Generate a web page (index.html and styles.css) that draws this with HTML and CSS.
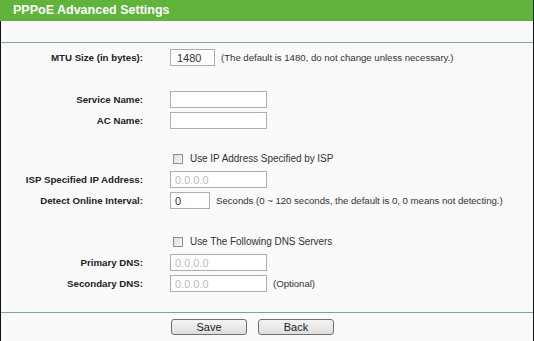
FILE: index.html
```html
<!DOCTYPE html>
<html lang="en">
<head>
    <meta charset="UTF-8">
    <title>PPPoE Advanced Settings</title>
    <link rel="stylesheet" href="styles.css">
</head>
<body>
    <div class="panel">
        <div class="title">PPPoE Advanced Settings</div>
        <div class="box">
            <div class="top-gap"></div>
            <div class="content">
                <div class="row">
                    <label class="lbl">MTU Size (in bytes):</label>
                    <input type="text" class="inp inp-mtu" value="1480">
                    <span class="note">(The default is 1480, do not change unless necessary.)</span>
                </div>
                <div class="spacer"></div>
                <div class="row">
                    <label class="lbl">Service Name:</label>
                    <input type="text" class="inp">
                </div>
                <div class="row">
                    <label class="lbl">AC Name:</label>
                    <input type="text" class="inp">
                </div>
                <div class="spacer short"></div>
                <div class="row">
                    <span class="lbl"></span>
                    <span class="chk"></span>
                    <span class="note chk-text">Use IP Address Specified by ISP</span>
                </div>
                <div class="row">
                    <label class="lbl">ISP Specified IP Address:</label>
                    <input type="text" class="inp off" value="0.0.0.0" disabled>
                </div>
                <div class="row">
                    <label class="lbl">Detect Online Interval:</label>
                    <input type="text" class="inp inp-small" value="0">
                    <span class="note">Seconds (0 ~ 120 seconds, the default is 0, 0 means not detecting.)</span>
                </div>
                <div class="spacer mid"></div>
                <div class="row">
                    <span class="lbl"></span>
                    <span class="chk"></span>
                    <span class="note chk-text">Use The Following DNS Servers</span>
                </div>
                <div class="row">
                    <label class="lbl">Primary DNS:</label>
                    <input type="text" class="inp off" value="0.0.0.0" disabled>
                </div>
                <div class="row">
                    <label class="lbl">Secondary DNS:</label>
                    <input type="text" class="inp off" value="0.0.0.0" disabled>
                    <span class="note">(Optional)</span>
                </div>
            </div>
            <div class="footer">
                <button class="btn">Save</button>
                <button class="btn">Back</button>
            </div>
        </div>
    </div>
</body>
</html>
```

FILE: styles.css
```css
body {
    margin: 0;
    font-family: "Liberation Sans", Arial, sans-serif;
    background: #ffffff;
}
.panel {
    width: 534px;
    height: 341px;
    display: flex;
    flex-direction: column;
}
.title {
    height: 21px;
    line-height: 21px;
    padding-left: 13px;
    background: #61b43b;
    color: #ffffff;
    font-size: 12.5px;
    font-weight: bold;
    border-right: 1px solid #222;
}
.box {
    flex: 1;
    display: flex;
    flex-direction: column;
    background: #fafafa;
    border-left: 1px solid #111;
    border-right: 1px solid #111;
}
.top-gap {
    height: 21px;
    border-bottom: 1px solid #7ca88a;
}
.content {
    padding-top: 4px;
    height: 265px;
    border-bottom: 1px solid #7ca88a;
    box-sizing: border-box;
    height: 270px;
}
.row {
    display: flex;
    align-items: center;
    height: 21px;
    font-size: 9.7px;
    color: #333;
}
.spacer {
    height: 21px;
}
.spacer.short {
    height: 17px;
}
.spacer.mid {
    height: 20px;
}
.lbl {
    width: 142px;
    margin-right: 27px;
    text-align: right;
    font-weight: bold;
    color: #222;
}
.inp {
    width: 97px;
    height: 17px;
    box-sizing: border-box;
    margin: 0;
    padding: 0 0 0 4px;
    border: 1px solid #a9afb3;
    background: #ffffff;
    font-family: "Liberation Sans", Arial, sans-serif;
    font-size: 11px;
    color: #333;
}
.inp-mtu {
    width: 45px;
    padding-left: 6px;
}
.inp-small {
    width: 40px;
}
.inp.off {
    color: #bcbcbc;
    background: #ffffff;
}
.note {
    margin-left: 6px;
    letter-spacing: -0.05px;
}
.chk {
    width: 10px;
    height: 10px;
    box-sizing: border-box;
    margin-left: 3px;
    border: 1px solid #8e8f8f;
    background: linear-gradient(135deg, #dcdcdc, #fafafa);
}
.chk-text {
    margin-left: 7px;
    font-size: 10px;
}
.footer {
    flex: 1;
    display: flex;
    gap: 11px;
    padding: 6px 0 0 170px;
}
.btn {
    width: 76px;
    height: 16px;
    padding: 0;
    border: 1px solid #707070;
    border-radius: 3px;
    background: linear-gradient(#f4f4f4, #dedede);
    font-family: "Liberation Sans", Arial, sans-serif;
    font-size: 11px;
    color: #222;
}
```
